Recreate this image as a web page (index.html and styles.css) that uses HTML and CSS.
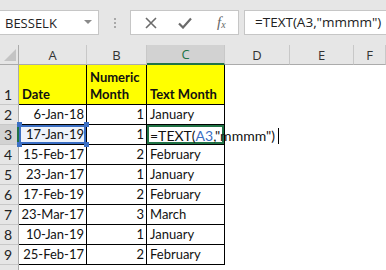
FILE: index.html
```html
<!DOCTYPE html>
<html lang="en">
<head>
  <meta charset="UTF-8" />
  <title>TEXT month</title>
  <link rel="stylesheet" href="styles.css">
</head>
<body>
  <div class="toolbar">
    <div class="namebox">
      <span>BESSELK</span>
      <svg class="caret" width="8" height="5" viewBox="0 0 8 5"><polygon points="0,0 8,0 4,4" fill="#8a8a8a"/></svg>
    </div>
    <div class="grip"><i></i><i></i><i></i></div>
    <div class="fxbox">
      <svg width="12" height="12" viewBox="0 0 12 12"><path d="M1 1 L11 11 M11 1 L1 11" stroke="#6b6b6b" stroke-width="1.6"/></svg>
      <svg width="14" height="12" viewBox="0 0 14 12"><path d="M1 6.5 L5 10.5 L13 1.5" stroke="#6b6b6b" stroke-width="2.2" fill="none"/></svg>
      <span class="fx">f<sub>x</sub></span>
    </div>
    <div class="formula">=TEXT(A3,"mmmm")</div>
  </div>

  <div class="sheet">
    <div class="hd corner"><svg width="12" height="12" viewBox="0 0 12 12"><polygon points="12,0 12,12 0,12" fill="#c4c4c4"/></svg></div>
    <div class="hd col">A</div>
    <div class="hd col">B</div>
    <div class="hd col on">C</div>
    <div class="hd col">D</div>
    <div class="hd col">E</div>
    <div class="hd col">F</div>

    <div class="rh">1</div>
    <div class="c b y">Date</div>
    <div class="c b y">Numeric Month</div>
    <div class="c b y">Text Month</div>
    <div class="c"></div><div class="c"></div><div class="c"></div>

    <div class="rh">2</div>
    <div class="c r">6-Jan-18</div>
    <div class="c r">1</div>
    <div class="c">January</div>
    <div class="c"></div><div class="c"></div><div class="c"></div>

    <div class="rh on">3</div>
    <div class="c r ref">17-Jan-19<i class="h tl"></i><i class="h tr"></i><i class="h bl"></i><i class="h br"></i></div>
    <div class="c r">1</div>
    <div class="c edit">=TEXT(<span class="blue">A3</span>,"mmmm")<i class="caret-bar"></i></div>
    <div class="c"></div><div class="c"></div><div class="c"></div>

    <div class="rh">4</div>
    <div class="c r">15-Feb-17</div>
    <div class="c r">2</div>
    <div class="c">February</div>
    <div class="c"></div><div class="c"></div><div class="c"></div>

    <div class="rh">5</div>
    <div class="c r">23-Jan-17</div>
    <div class="c r">1</div>
    <div class="c">January</div>
    <div class="c"></div><div class="c"></div><div class="c"></div>

    <div class="rh">6</div>
    <div class="c r">17-Feb-19</div>
    <div class="c r">2</div>
    <div class="c">February</div>
    <div class="c"></div><div class="c"></div><div class="c"></div>

    <div class="rh">7</div>
    <div class="c r">23-Mar-17</div>
    <div class="c r">3</div>
    <div class="c">March</div>
    <div class="c"></div><div class="c"></div><div class="c"></div>

    <div class="rh">8</div>
    <div class="c r">10-Jan-19</div>
    <div class="c r">1</div>
    <div class="c">January</div>
    <div class="c"></div><div class="c"></div><div class="c"></div>

    <div class="rh">9</div>
    <div class="c r">25-Feb-17</div>
    <div class="c r">2</div>
    <div class="c">February</div>
    <div class="c"></div><div class="c"></div><div class="c"></div>

    <div class="rh"></div>
  </div>
</body>
</html>
```

FILE: styles.css
```css
* {
  box-sizing: border-box;
}

body {
  margin: 0;
  width: 386px;
  height: 270px;
  overflow: hidden;
  background-color: #ffffff;
  font-family: Lato, "Liberation Sans", sans-serif;
}

/* formula bar */
.toolbar {
  height: 45px;
  padding-top: 10px;
  background-color: #e6e6e6;
  display: flex;
  align-items: flex-start;
}

.namebox {
  width: 99px;
  height: 25px;
  background-color: #fff;
  border: 1px solid #c6c6c6;
  border-left: none;
  display: flex;
  align-items: center;
  justify-content: space-between;
  padding: 0 6px 0 5px;
  font-family: "Open Sans", sans-serif;
  font-size: 13px;
  color: #222;
}

.grip {
  width: 31px;
  height: 25px;
  display: flex;
  flex-direction: column;
  align-items: center;
  justify-content: center;
  gap: 2px;
}

.grip i {
  width: 2px;
  height: 2px;
  background-color: #a8a8a8;
}

.fxbox {
  width: 109px;
  height: 25px;
  background-color: #fff;
  border: 1px solid #c6c6c6;
  display: flex;
  align-items: center;
  gap: 21px;
  padding-left: 14px;
}

.fx {
  font-family: "Liberation Serif", serif;
  font-style: italic;
  font-size: 15px;
  color: #666;
  margin-left: 4px;
}

.fx sub {
  font-size: 10px;
  vertical-align: -1px;
}

.formula {
  flex: 1;
  height: 25px;
  margin-left: 5px;
  background-color: #fff;
  border: 1px solid #c6c6c6;
  border-right: none;
  padding-left: 10px;
  font-family: "Open Sans", sans-serif;
  font-size: 13.5px;
  line-height: 23px;
  color: #222;
}

/* grid */
.sheet {
  height: 225px;
  overflow: hidden;
  display: grid;
  grid-template-columns: 19px 68px 60px 78px 65px 64px 1fr;
  grid-template-rows: 20px 40px repeat(10, 20px);
  font-size: 13px;
  color: #111;
}

.hd {
  background-color: #e6e6e6;
  border-right: 1px solid #c8c8c8;
  border-bottom: 1px solid #ababab;
  font-family: "Open Sans", sans-serif;
  font-size: 13px;
  color: #333;
  display: flex;
  align-items: center;
  justify-content: center;
}

.corner {
  justify-content: flex-end;
  align-items: flex-end;
  padding: 0 2px 3px 0;
  border-right-color: #ababab;
}

.col.on {
  background-color: #d2d2d2;
  border-bottom: 2px solid #217346;
  color: #217346;
}

.rh {
  background-color: #e6e6e6;
  border-right: 1px solid #ababab;
  border-bottom: 1px solid #c8c8c8;
  padding-left: 4px;
  font-size: 14px;
  color: #222;
  display: flex;
  align-items: flex-end;
  line-height: 19px;
}

.rh.on {
  background-color: #d2d2d2;
  border-right: 2px solid #217346;
}

.c {
  position: relative;
  padding: 0 3px;
  display: flex;
  align-items: flex-end;
  line-height: 19px;
  white-space: nowrap;
}

.sheet > .c:nth-child(7n+2),
.sheet > .c:nth-child(7n+3),
.sheet > .c:nth-child(7n+4) {
  border-right: 1px solid #000;
  border-bottom: 1px solid #000;
}

.y {
  background-color: #ffff00;
  white-space: normal;
  line-height: 17px;
  padding-bottom: 1px;
}

.b {
  font-weight: bold;
}

.r {
  justify-content: flex-end;
  padding-right: 2px;
}

/* range finder on A3 */
.ref {
  background-color: #eef3fb;
  box-shadow: inset 0 0 0 2px #3b6fc4;
}

.h {
  position: absolute;
  width: 5px;
  height: 5px;
  background-color: #3b6fc4;
  z-index: 2;
}

.tl { left: -2px; top: -3px; }
.tr { right: -3px; top: -3px; }
.bl { left: -2px; bottom: -3px; }
.br { right: -3px; bottom: -3px; }

/* cell in edit mode */
.sheet > .edit {
  display: block;
  padding-top: 1px;
  font-size: 14px;
  overflow: visible;
  z-index: 1;
  box-shadow: inset 0 0 0 2px #217346;
}

.blue {
  color: #3b6fc4;
}

.caret-bar {
  display: inline-block;
  width: 1px;
  height: 16px;
  margin-left: 3px;
  vertical-align: -3px;
  background-color: #000;
}
```
